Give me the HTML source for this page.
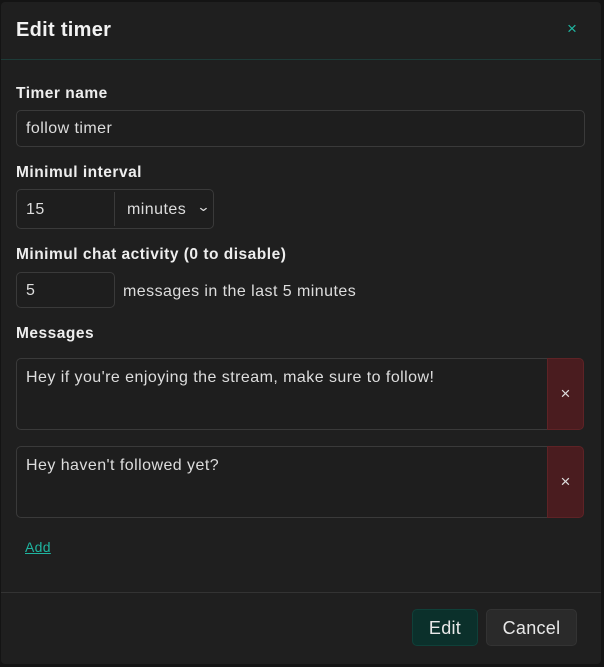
<!DOCTYPE html>
<html><head><style>
body{margin:0;width:604px;height:667px;background:#141414;font-family:"Liberation Sans",sans-serif;color:#e8e8e8;overflow:hidden;position:relative}
.m{position:absolute;left:1px;top:2px;width:600px;height:662px;background:#1f1f1f;border-radius:4px}
.a{position:absolute}
.t{font-size:20px;font-weight:bold;color:#f2f2f2;letter-spacing:0.3px}
.l{font-size:15.5px;font-weight:bold;color:#eee;letter-spacing:0.5px}
.in{position:absolute;border:1px solid #3a3a3a;border-radius:5px;background:#1e1e1e;font-size:16px;color:#ddd;box-sizing:border-box;padding-left:9px;line-height:34px;letter-spacing:0.45px}
.x{position:absolute;width:37px;background:#4a1c1f;border:1px solid #5e2326;border-radius:0 5px 5px 0;box-sizing:border-box;text-align:center;color:#ddd;font-size:17px}
.b{position:absolute;top:609px;height:37px;border-radius:5px;font-size:18px;text-align:center;line-height:36px;box-sizing:border-box;letter-spacing:0.3px}
</style></head><body>
<div class="m"></div>
<div class="a t" style="left:16px;top:19px">Edit timer</div>
<div class="a" style="left:567px;top:19px;color:#1fb5a0;font-size:17px">×</div>
<div class="a" style="left:1px;top:59px;width:600px;height:1px;background:#1d3b38"></div>
<div class="a l" style="left:16px;top:85px">Timer name</div>
<div class="in" style="left:16px;top:110px;width:569px;height:37px;padding-top:1px">follow timer</div>
<div class="a l" style="left:16px;top:164px">Minimul interval</div>
<div class="in" style="left:16px;top:189px;width:198px;height:40px;line-height:38px;padding-top:1px">15</div>
<div class="a" style="left:114px;top:192px;width:1px;height:34px;background:#3a3a3a"></div>
<div class="a" style="left:127px;top:201px;font-size:16px;color:#ddd;letter-spacing:0.45px">minutes</div>
<div class="a" style="left:198px;top:199px;font-size:13px;color:#ddd;transform:scaleX(1.3)">⌄</div>
<div class="a l" style="left:16px;top:246px">Minimul chat activity (0 to disable)</div>
<div class="in" style="left:16px;top:272px;width:99px;height:36px;padding-top:1px">5</div>
<div class="a" style="left:123px;top:283px;font-size:16px;color:#ddd;letter-spacing:0.45px">messages in the last 5 minutes</div>
<div class="a l" style="left:16px;top:325px">Messages</div>
<div class="in" style="left:16px;top:358px;width:533px;height:72px;border-radius:5px 0 0 5px;line-height:20px;padding-top:9px">Hey if you're enjoying the stream, make sure to follow!</div>
<div class="x" style="left:547px;top:358px;height:72px;line-height:70px">×</div>
<div class="in" style="left:16px;top:446px;width:533px;height:72px;border-radius:5px 0 0 5px;line-height:20px;padding-top:9px">Hey haven't followed yet?</div>
<div class="x" style="left:547px;top:446px;height:72px;line-height:70px">×</div>
<div class="a" style="left:25px;top:539px;font-size:14px;color:#1fb5a0;text-decoration:underline;letter-spacing:0.3px">Add</div>
<div class="a" style="left:1px;top:592px;width:600px;height:1px;background:#333"></div>
<div class="b" style="left:412px;width:66px;background:#0b302b;border:1px solid #0f4039;color:#e8e8e8">Edit</div>
<div class="b" style="left:486px;width:91px;background:#2a2a2a;border:1px solid #333;color:#e8e8e8">Cancel</div>
</body></html>
